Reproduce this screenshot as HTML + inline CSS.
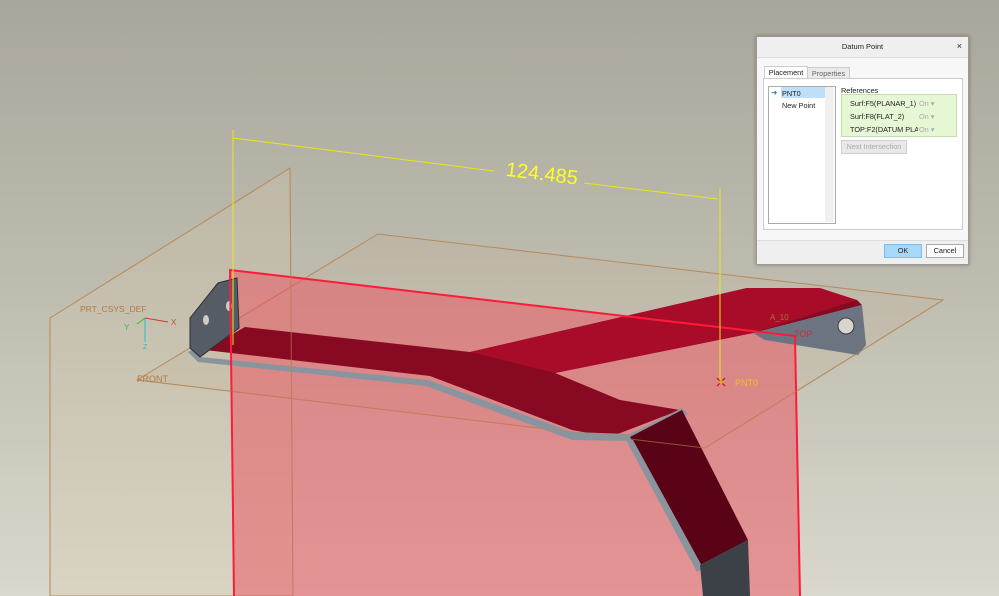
<!DOCTYPE html>
<html><head><style>
html,body{margin:0;padding:0;width:999px;height:596px;overflow:hidden;font-family:"Liberation Sans",sans-serif}
#bg{position:absolute;left:0;top:0;width:999px;height:596px;background:linear-gradient(#a9a69b,#bdbaae 45%,#dad8cc)}
svg{position:absolute;left:0;top:0}
.dlg{position:absolute;left:756px;top:36px;width:211px;height:227px;background:#efefef;border:1px solid #9a9a9a;box-shadow:0 0 4px rgba(0,0,0,.3);font-size:7.3px;color:#222}
.t{position:absolute}
</style></head><body>
<div id="bg"></div>
<svg width="999" height="596" viewBox="0 0 999 596">
<polygon points="50,318 290,168 293,596 50,596" fill="#d8c8a8" fill-opacity="0.25" stroke="#b58a5a" stroke-width="1"/>
<polygon points="378,234 943,300 705,448 137,380" fill="#c8b48e" fill-opacity="0.18" stroke="#b58a5a" stroke-width="1"/>
<!-- red plane fill -->
<polygon points="230,270 795,336 800,596 234,596" fill="#ee4f5e" fill-opacity="0.5"/>
<!-- bracket -->
<polygon points="245,327 470,352 747,288 820,288 822,296 857,300 862,305 753,333 555,373 620,400 680,410 610,437 572,430 430,376 205,350" fill="#880a22"/>
<polygon points="470,352 747,288 820,288 857,300 753,333 555,373" fill="#a80c28"/>
<polygon points="753,333 862,305 866,345 858,355 765,340" fill="#6b7480"/>
<ellipse cx="846" cy="326" rx="8" ry="8" fill="#d8d6cc" stroke="#3a3f46"/>
<polygon points="192,350 200,357 428,380 572,432 630,434 682,408 688,414 634,441 572,440 426,386 198,362 188,352" fill="#8a949e"/>
<polygon points="630,437 682,410 748,540 700,565" fill="#5a0216"/>
<polygon points="626,440 633,440 703,568 697,572" fill="#8a949e"/>
<polygon points="700,565 748,540 750,596 703,596" fill="#3c4047"/>
<polygon points="190,318 218,283 237,278 239,328 200,357 190,348" fill="#555c66" stroke="#2a2e33"/>
<ellipse cx="206" cy="320" rx="3" ry="5" fill="#d0cec4"/>
<ellipse cx="229" cy="306" rx="3" ry="5" fill="#d0cec4"/>
<!-- plane outline -->
<polyline points="234,596 230,270 795,336 800,596" fill="none" stroke="#ff1a3a" stroke-width="2"/>
<line x1="290" y1="168" x2="293" y2="596" stroke="#b58a5a" stroke-opacity="0.6"/>
<line x1="137" y1="380" x2="705" y2="448" stroke="#b58a5a" stroke-opacity="0.6"/>
<line x1="705" y1="448" x2="943" y2="300" stroke="#b58a5a" stroke-opacity="0.6"/>
<g stroke="#e8e818" stroke-width="1" fill="none">
<line x1="233" y1="130" x2="233" y2="345"/>
<line x1="720" y1="188" x2="720" y2="382"/>
<line x1="233" y1="138" x2="494" y2="171"/>
<line x1="584" y1="183" x2="718" y2="199"/>
</g>
<text x="505" y="180" font-size="20" fill="#ffff20" transform="rotate(7 540 180)">124.485</text>
<g stroke="#c01010" stroke-width="1.2"><line x1="717" y1="378" x2="725" y2="386"/><line x1="725" y1="378" x2="717" y2="386"/></g>
<circle cx="721" cy="382" r="2" fill="#e8a020"/>
<text x="735" y="386" font-size="9" fill="#f0c020">PNT0</text>
<text x="794" y="337" font-size="9" fill="#c83040">TOP</text>
<text x="770" y="320" font-size="8" fill="#b07040">A_10</text>
<text x="137" y="382" font-size="9" fill="#b07a48">FRONT</text>
<text x="80" y="312" font-size="8.5" fill="#b07a48">PRT_CSYS_DEF</text>
<line x1="145" y1="318" x2="168" y2="322" stroke="#e03030"/><text x="171" y="325" font-size="8" fill="#e04040">X</text>
<line x1="145" y1="318" x2="145" y2="342" stroke="#20c0d0"/><text x="143" y="349" font-size="7" fill="#20c0d0">Z</text>
<line x1="145" y1="318" x2="137" y2="324" stroke="#30c030"/><text x="124" y="330" font-size="8" fill="#40c040">Y</text>
</svg>
<div class="dlg">
<div class="t" style="left:0;top:0;width:211px;height:20px;text-align:center;line-height:19px;font-size:7.5px">Datum Point</div>
<div class="t" style="right:6px;top:4px;font-size:9px">×</div>
<div class="t" style="left:0;top:20px;width:211px;height:182px;background:#f7f7f7;border-top:1px solid #ddd;border-bottom:1px solid #ddd"></div>
<div class="t" style="left:7px;top:29px;width:42px;height:12px;background:#fff;border:1px solid #ccc;border-bottom:none;text-align:center;line-height:12px">Placement</div>
<div class="t" style="left:50px;top:30px;width:41px;height:11px;background:#eaeaea;border:1px solid #ccc;text-align:center;line-height:11px;color:#666">Properties</div>
<div class="t" style="left:6px;top:41px;width:198px;height:150px;background:#fff;border:1px solid #ccc"></div>
<div class="t" style="left:11px;top:49px;width:66px;height:136px;border:1px solid #aaa;background:#fff"></div>
<div class="t" style="left:68px;top:50px;width:9px;height:135px;background:#f0f0f0"></div>
<div class="t" style="left:24px;top:50px;width:44px;height:11px;background:#bde0f8"></div>
<div class="t" style="left:14px;top:51px;color:#1870c0">➔</div>
<div class="t" style="left:25px;top:52px">PNT0</div>
<div class="t" style="left:25px;top:64px">New Point</div>
<div class="t" style="left:84px;top:49px">References</div>
<div class="t" style="left:84px;top:57px;width:114px;height:41px;background:#e6f7d6;border:1px solid #c6dcae"></div>
<div class="t" style="left:93px;top:62px">Surf:F5(PLANAR_1)</div>
<div class="t" style="left:93px;top:75px">Surf:F8(FLAT_2)</div>
<div class="t" style="left:93px;top:88px;width:68px;overflow:hidden;white-space:nowrap">TOP:F2(DATUM PLAN</div>
<div class="t" style="left:162px;top:62px;color:#aaa">On ▾</div>
<div class="t" style="left:162px;top:75px;color:#aaa">On ▾</div>
<div class="t" style="left:162px;top:88px;color:#aaa">On ▾</div>
<div class="t" style="left:84px;top:103px;width:64px;height:12px;background:#e8e8e8;border:1px solid #d0d0d0;color:#aaa;text-align:center;line-height:12px">Next Intersection</div>
<div class="t" style="left:127px;top:207px;width:36px;height:12px;background:#a8d8f8;border:1px solid #80bce8;text-align:center;line-height:12px">OK</div>
<div class="t" style="left:169px;top:207px;width:36px;height:12px;background:#fbfbfb;border:1px solid #aaa;text-align:center;line-height:12px">Cancel</div>
</div>
</body></html>
